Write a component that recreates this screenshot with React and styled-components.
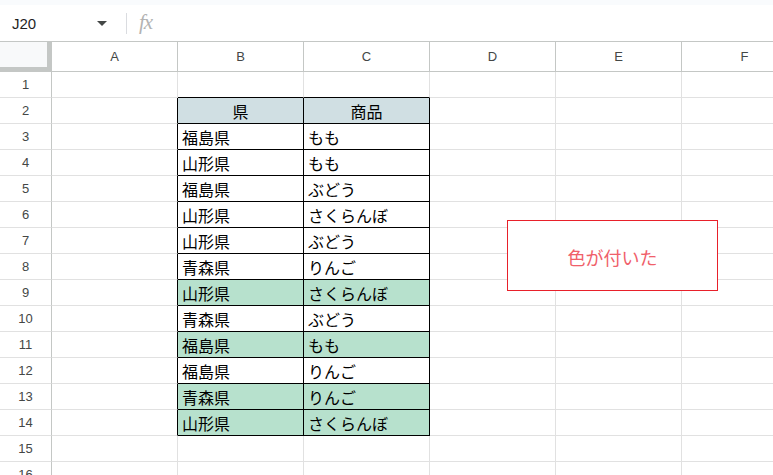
import styled, { createGlobalStyle } from "styled-components";

const GlobalStyle = createGlobalStyle`
  html, body {
    margin: 0;
    padding: 0;
    background: #ffffff;
    overflow: hidden;
  }
  body {
    font-family: Arial, "Liberation Sans", "Noto Sans CJK JP", sans-serif;
  }
`;

const COLS = ["A", "B", "C", "D", "E", "F"];
const rows = [
  null,
  ["県", "商品", "head"],
  ["福島県", "もも"],
  ["山形県", "もも"],
  ["福島県", "ぶどう"],
  ["山形県", "さくらんぼ"],
  ["山形県", "ぶどう"],
  ["青森県", "りんご"],
  ["山形県", "さくらんぼ", "green"],
  ["青森県", "ぶどう"],
  ["福島県", "もも", "green"],
  ["福島県", "りんご"],
  ["青森県", "りんご", "green"],
  ["山形県", "さくらんぼ", "green"],
  null,
  null,
];

const fills = { head: "#d0dfe3", green: "#b7e1cd" };

const Page = styled.div`
  position: relative;
  width: 773px;
  height: 475px;
  overflow: hidden;
`;

const TopStrip = styled.div`
  height: 5px;
  background: #f9fbfd;
`;

const FormulaBar = styled.div`
  display: flex;
  align-items: center;
  height: 36px;
  background: #ffffff;
`;

const NameBox = styled.div`
  display: flex;
  align-items: center;
  justify-content: space-between;
  width: 100px;
  padding-left: 12px;
  font-size: 15px;
  color: #1f1f1f;
`;

const Caret = styled.span`
  width: 0;
  height: 0;
  border-left: 5px solid transparent;
  border-right: 5px solid transparent;
  border-top: 5px solid #444746;
  margin-right: 5px;
`;

const Divider = styled.div`
  width: 1px;
  height: 21px;
  background: #dadce0;
  margin: 0 12px 0 14px;
`;

const Fx = styled.span`
  font-family: "Liberation Serif", "DejaVu Serif", serif;
  font-style: italic;
  font-size: 21px;
  color: #b3b3b3;
  letter-spacing: -1px;
  margin-top: -2px;
`;

const Grid = styled.div`
  display: grid;
  grid-template-columns: 52px repeat(6, 126px);
  grid-template-rows: 30px repeat(16, 26px);
  border-top: 1px solid #c4c7c5;
`;

const Corner = styled.div`
  background: #f8f9fa;
  border-right: 5px solid #c4c7c5;
  border-bottom: 5px solid #c4c7c5;
  box-sizing: border-box;
`;

const ColHead = styled.div`
  display: flex;
  align-items: center;
  justify-content: center;
  box-sizing: border-box;
  border-right: 1px solid #c4c7c5;
  border-bottom: 1px solid #c4c7c5;
  font-size: 13px;
  color: #444746;
`;

const RowHead = styled.div`
  display: flex;
  align-items: center;
  justify-content: center;
  box-sizing: border-box;
  border-right: 1px solid #c4c7c5;
  border-bottom: 1px solid #e1e1e1;
  font-size: 13px;
  color: #444746;
`;

const Cell = styled.div`
  display: flex;
  align-items: center;
  justify-content: ${(p) => (p.$center ? "center" : "flex-start")};
  box-sizing: border-box;
  padding-left: ${(p) => (p.$center ? "0" : "4px")};
  background: ${(p) => p.$fill || "transparent"};
  border-right: 1px solid ${(p) => (p.$darkRight ? "#000000" : "#e1e1e1")};
  border-bottom: 1px solid ${(p) => (p.$darkBottom ? "#000000" : "#e1e1e1")};
  font-family: "Noto Sans CJK JP", "Liberation Sans", sans-serif;
  font-size: 16px;
  color: #000000;
  white-space: nowrap;
  overflow: hidden;
`;

const Shape = styled.div`
  position: absolute;
  left: 507px;
  top: 220px;
  width: 211px;
  height: 71px;
  box-sizing: border-box;
  border: 1px solid #e8202a;
  background: #ffffff;
  display: flex;
  align-items: center;
  justify-content: center;
  font-family: "Noto Sans CJK JP", sans-serif;
  font-size: 18px;
  color: #f0606a;
  padding-top: 2px;
`;

const inTable = (r, c) => r >= 2 && r <= 14 && (c === 1 || c === 2);

export default function App() {
  return (
    <Page>
      <GlobalStyle />
      <TopStrip />
      <FormulaBar>
        <NameBox>
          J20
          <Caret />
        </NameBox>
        <Divider />
        <Fx>fx</Fx>
      </FormulaBar>
      <Grid>
        <Corner />
        {COLS.map((c) => (
          <ColHead key={c}>{c}</ColHead>
        ))}
        {rows.map((data, i) => {
          const r = i + 1;
          return [
            <RowHead key={`h${r}`}>{r}</RowHead>,
            ...COLS.map((_, c) => {
              const table = inTable(r, c);
              const darkRight = table || inTable(r, c + 1);
              const darkBottom = table || inTable(r + 1, c);
              const text = data && (c === 1 || c === 2) ? data[c - 1] : "";
              return (
                <Cell
                  key={`${r}-${c}`}
                  $darkRight={darkRight}
                  $darkBottom={darkBottom}
                  $fill={table && data ? fills[data[2]] : undefined}
                  $center={data && data[2] === "head"}
                >
                  {text}
                </Cell>
              );
            }),
          ];
        })}
      </Grid>
      <Shape>色が付いた</Shape>
    </Page>
  );
}
